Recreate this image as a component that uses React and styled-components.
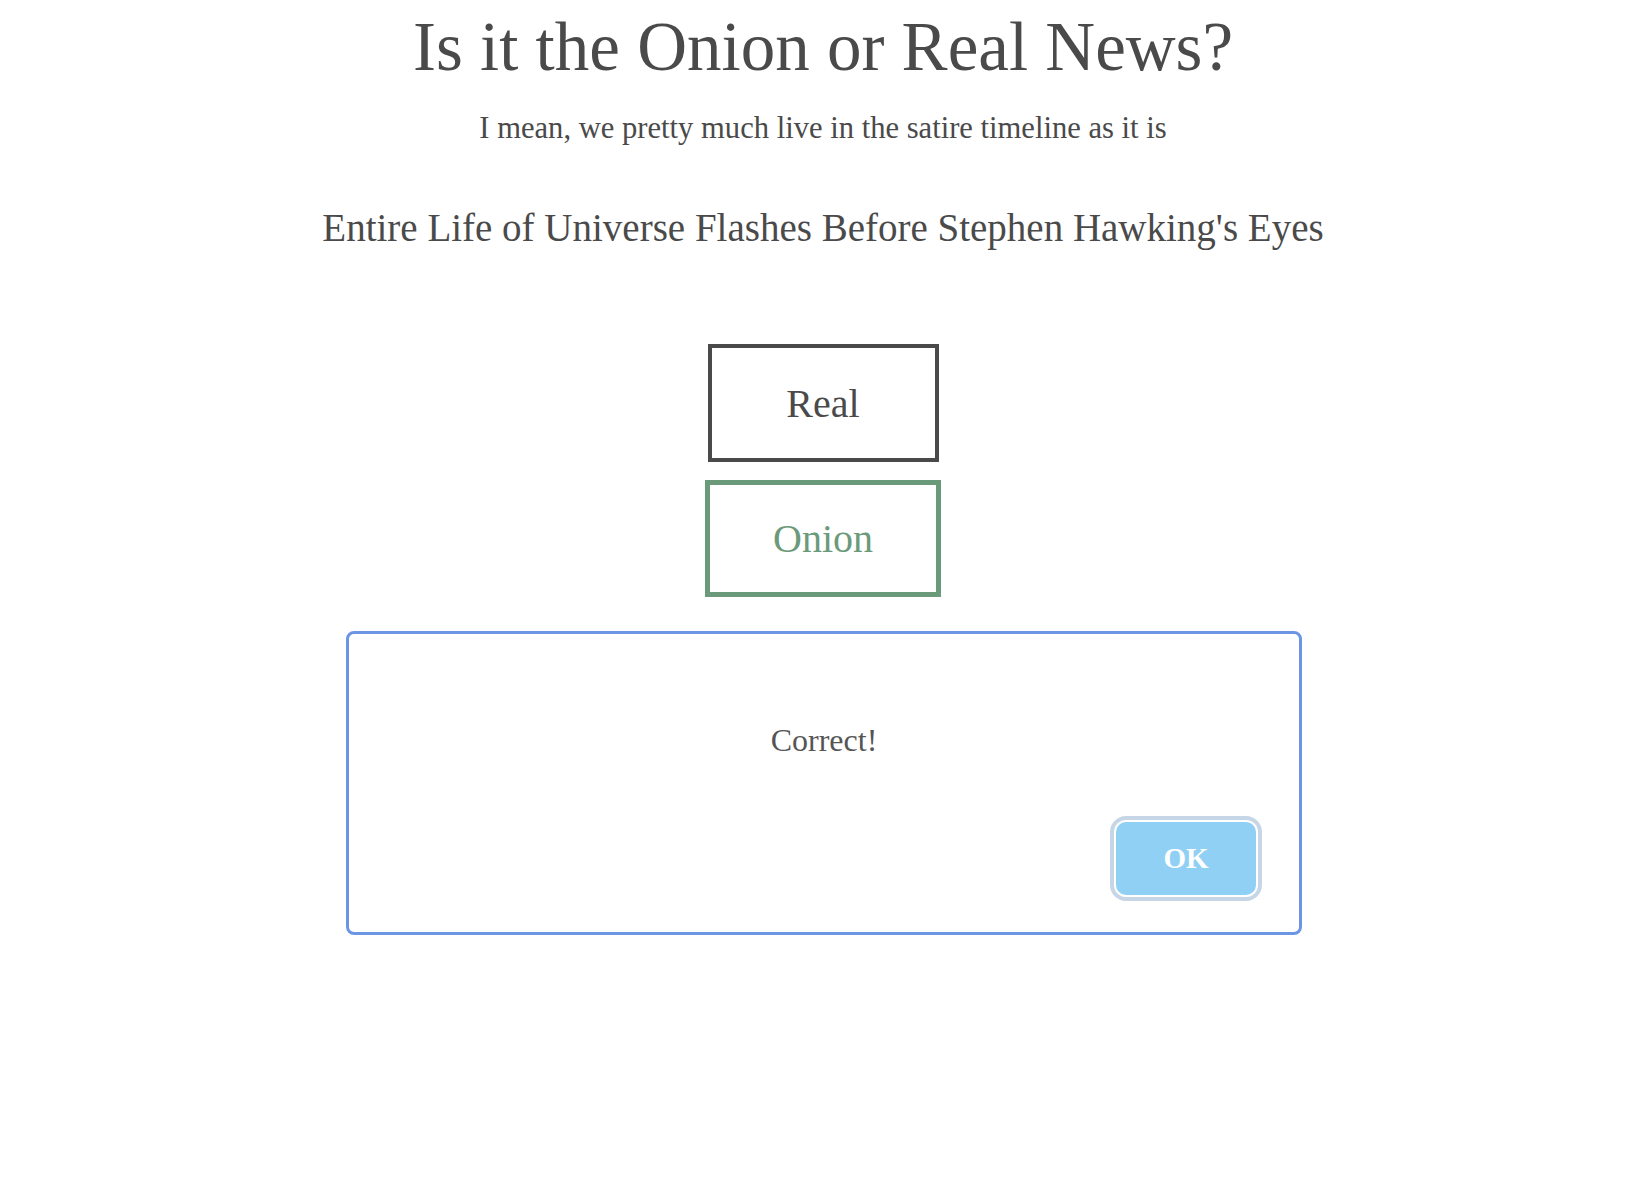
import React from 'react';
import styled, { createGlobalStyle } from 'styled-components';

const GlobalStyle = createGlobalStyle`
  html, body {
    margin: 0;
    padding: 0;
    background: #ffffff;
  }
  body {
    font-family: "Liberation Serif", "Times New Roman", serif;
    color: #4a4a4a;
  }
`;

const Page = styled.div`
  display: flex;
  flex-direction: column;
  align-items: center;
  padding: 0 0 0 10px;
  min-height: 1192px;
  box-sizing: border-box;
`;

const Title = styled.h1`
  margin: 7px 0 0;
  font-size: 69px;
  font-weight: normal;
  line-height: 80px;
  color: #4a4a4a;
`;

const Subtitle = styled.p`
  margin: 23px 0 0;
  font-size: 30.6px;
  line-height: 36px;
  color: #4a4a4a;
`;

const Headline = styled.h2`
  margin: 60px 0 0;
  font-size: 39px;
  font-weight: normal;
  line-height: 44px;
  color: #4a4a4a;
`;

const Choices = styled.div`
  display: flex;
  flex-direction: column;
  align-items: center;
  gap: 18px;
  margin-top: 94px;
`;

const Choice = styled.button`
  box-sizing: border-box;
  width: ${p => (p.selected ? '236px' : '231px')};
  height: ${p => (p.selected ? '117px' : '118px')};
  background: #ffffff;
  border: ${p => (p.selected ? '5px' : '4px')} solid ${p => p.color};
  color: ${p => p.color};
  font-family: "Liberation Serif", "Times New Roman", serif;
  font-size: 40px;
  padding: 0;
  cursor: pointer;
`;

const Modal = styled.div`
  box-sizing: border-box;
  width: 956px;
  height: 304px;
  margin: 34px 0 0 2px;
  border: 3px solid #6b96e4;
  border-radius: 8px;
  display: flex;
  flex-direction: column;
  padding: 0 37px 31px 0;
`;

const Message = styled.p`
  margin: 87px 0 0;
  flex: 1;
  text-align: center;
  padding-left: 37px;
  font-size: 32px;
  line-height: 38px;
  color: #555555;
`;

const Actions = styled.div`
  display: flex;
  justify-content: flex-end;
`;

const OkButton = styled.button`
  width: 140px;
  height: 73px;
  margin-right: 6px;
  margin-bottom: 6px;
  border: none;
  border-radius: 10px;
  background: #8fd0f4;
  color: #ffffff;
  font-family: "Liberation Serif", "Times New Roman", serif;
  font-weight: bold;
  font-size: 29px;
  box-shadow: 0 0 0 2px #ffffff, 0 0 0 6px #c7d6e6;
  cursor: pointer;
`;

export default function App() {
  return (
    <>
      <GlobalStyle />
      <Page>
        <Title>Is it the Onion or Real News?</Title>
        <Subtitle>I mean, we pretty much live in the satire timeline as it is</Subtitle>
        <Headline>Entire Life of Universe Flashes Before Stephen Hawking's Eyes</Headline>
        <Choices>
          <Choice color="#4a4a4a">Real</Choice>
          <Choice color="#6b9a7b" selected>Onion</Choice>
        </Choices>
        <Modal>
          <Message>Correct!</Message>
          <Actions>
            <OkButton>OK</OkButton>
          </Actions>
        </Modal>
      </Page>
    </>
  );
}
